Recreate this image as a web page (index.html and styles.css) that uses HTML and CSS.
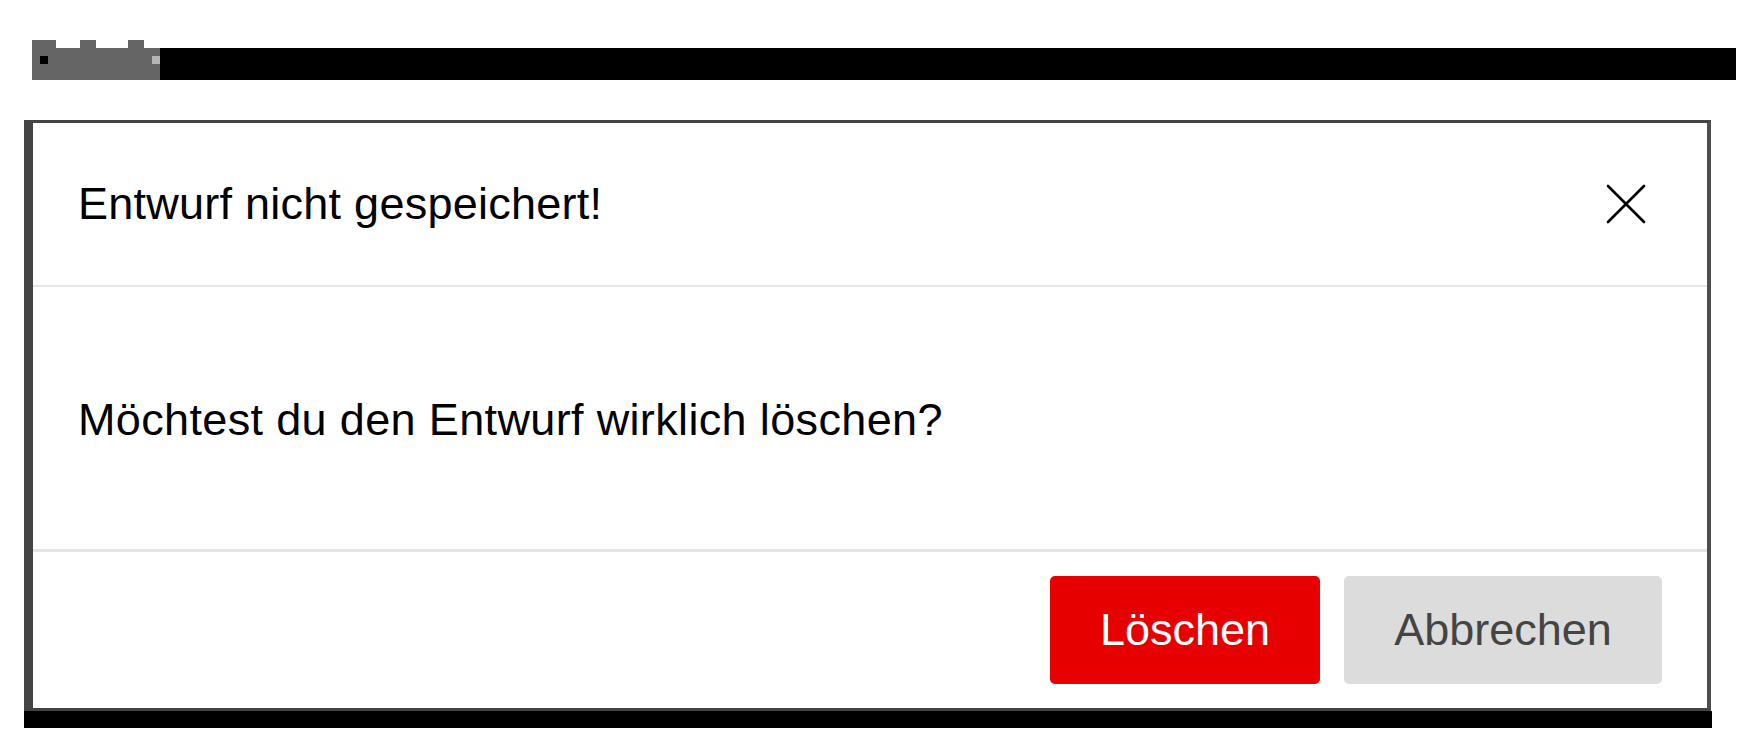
FILE: index.html
```html
<!DOCTYPE html>
<html lang="de">
<head>
<meta charset="utf-8">
<title>Entwurf nicht gespeichert</title>
<link rel="stylesheet" href="styles.css">
</head>
<body>
<div class="topbar">
  <div class="redact">
    <div class="tabs">
      <span class="tab on w24"></span><span class="tab w24"></span><span class="tab on w16"></span><span class="tab w32"></span><span class="tab on w16"></span>
    </div>
    <div class="redact-body"><span class="pix"></span><span class="pix-light"></span></div>
  </div>
  <div class="bar"></div>
</div>

<div class="dialog">
  <div class="dialog-header">
    <h2 class="dialog-title">Entwurf nicht gespeichert!</h2>
    <button class="close" aria-label="Schließen">
      <svg width="40" height="40" viewBox="0 0 40 40"><path d="M2 2 L38 38 M38 2 L2 38" stroke="#000" stroke-width="2.6" stroke-linecap="round" fill="none"/></svg>
    </button>
  </div>
  <div class="dialog-body">
    <p class="dialog-text">Möchtest du den Entwurf wirklich löschen?</p>
  </div>
  <div class="dialog-footer">
    <button class="btn btn-danger">Löschen</button>
    <button class="btn btn-secondary">Abbrechen</button>
  </div>
</div>
<div class="dialog-shadow"></div>
</body>
</html>
```
FILE: styles.css
```css
* { box-sizing: border-box; }
html, body { margin: 0; padding: 0; background: #fff; }
body { font-family: "Liberation Sans", Arial, Helvetica, sans-serif; color: #000; }

.topbar {
  display: flex;
  align-items: flex-end;
  margin: 40px 4px 0 32px;
  height: 40px;
}
.redact { width: 128px; height: 40px; display: flex; flex-direction: column; }
.tabs { display: flex; height: 8px; }
.tab { display: block; height: 8px; }
.tab.on { background: #656565; }
.w16 { width: 16px; }
.w24 { width: 24px; }
.w32 { width: 32px; }
.redact-body {
  height: 32px;
  background: #656565;
  display: flex;
  align-items: flex-start;
  padding: 8px 0 0 8px;
}
.pix { width: 8px; height: 8px; background: #000; }
.pix-light { width: 8px; height: 8px; background: #b5b5b5; margin-left: auto; }
.bar { flex: 1; height: 32px; background: #000; }

.dialog {
  margin: 40px 0 0 24px;
  width: 1687px;
  background: #fff;
  border-top: 3px solid #444;
  border-left: 9px solid #444;
  border-right: 4px solid #4d4d4d;
  border-bottom: 3px solid #444;
}
.dialog-header {
  height: 164px;
  padding: 0 45px;
  border-bottom: 2px solid #e5e5e5;
  display: flex;
  align-items: center;
  justify-content: space-between;
}
.dialog-title {
  margin: 0;
  font-size: 45px;
  font-weight: 400;
  line-height: 52px;
  letter-spacing: 0.25px;
}
.close {
  width: 72px;
  height: 72px;
  padding: 0;
  border: none;
  background: transparent;
  display: flex;
  align-items: center;
  justify-content: center;
}
.close svg { display: block; }
.dialog-body {
  height: 262px;
  padding: 107px 45px 0;
}
.dialog-text {
  margin: 0;
  font-size: 45px;
  line-height: 52px;
  letter-spacing: 0.35px;
}
.dialog-footer {
  border-top: 3px solid #e5e5e5;
  padding: 24px 45px;
  display: flex;
  justify-content: flex-end;
  gap: 24px;
}
.btn {
  height: 108px;
  border: none;
  border-radius: 5px;
  font-family: inherit;
  font-size: 45px;
  padding: 0;
  text-align: center;
}
.btn-danger { width: 270px; background: #e60000; color: #fff; }
.btn-secondary { width: 318px; background: #dcdcdc; color: #444; }

.dialog-shadow {
  margin-left: 24px;
  width: 1688px;
  height: 17px;
  background: #000;
}
```
